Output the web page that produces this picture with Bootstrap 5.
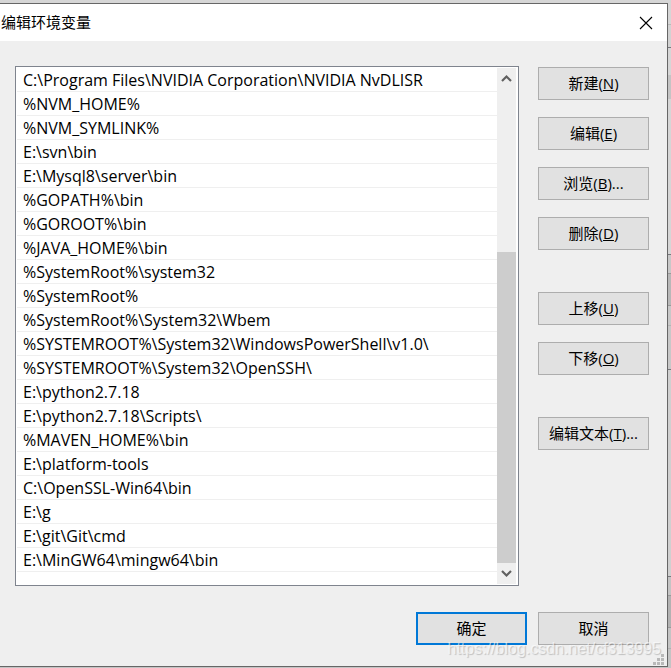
<!DOCTYPE html>
<html lang="zh-CN">
<head>
<meta charset="utf-8">
<meta name="viewport" content="width=device-width, initial-scale=1">
<title>编辑环境变量</title>
<link rel="stylesheet" href="https://cdn.jsdelivr.net/npm/bootstrap@5.3.0/dist/css/bootstrap.min.css">
<style>
  body {
    font-family: "Open Sans", "Noto Sans CJK SC", sans-serif;
    font-size: 15px;
    line-height: 24px;
    color: #000;
    background: #cfcfcf;
  }
  .desktop {
    padding: 3px 3px 1px 0;
    background: linear-gradient(#d6d6d6 0 24px, #b9b9b9 24px 25px, #d2d2d2 25px 47px, #77777c 47px 48px, #d6d6d6 48px 75px, #c4c4c4 75px 99px, #d6d6d6 99px 254px, #77777c 254px 255px, #c8c8c8 255px 273px, #999 273px 274px, #b8b8b8 274px 305px, #999 305px 306px, #c8c8c8 306px 325px, #b4b4b4 325px 326px, #c8c8c8 326px 369px, #77777c 369px 370px, #d0d0d0 370px 576px, #77777c 576px 577px, #c4c4c4 577px 595px, #999 595px 596px, #b2b2b2 596px 627px, #999 627px 628px, #c4c4c4 628px 648px, #b0b0b0 648px 649px, #c4c4c4 649px);
  }
  .dialog { background: #efefef; border: 1px solid #666; border-left: 0; }
  .titlebar { height: 37px; background: #fff; padding: 0 14px 0 1px; }
  .titlebar h1 { font-size: 15px; line-height: 24px; padding-bottom: 2px; }
  .close-x { width: 14px; height: 14px; }
  .dialog-main { padding: 25px 18px 0 15px; gap: 19px; }
  .paths { background: #fff; border: 1px solid #7f848e; padding: 1px; }
  .paths li { height: 24px; padding-left: 6px; border-bottom: 1px solid #efefef; font-size: 16px; line-height: 24px; }
  .scroll { width: 20px; background: #efefef; border-right: 1px solid #fff; }
  .scroll button { height: 21px; }
  .thumb { margin-top: 163px; background: #cdcdcd; }
  .side { width: 111px; gap: 17px; padding-top: 1px; }
  .key { width: 111px; height: 33px; background: #e1e1e1; border: 1px solid #adadad; color: #000; font-size: 15px; line-height: 24px; padding: 0 0 2px; }
  .key:hover { background: #e5f1fb; }
  .key.primary { border: 2px solid #0078d7; }
  .gap-above { margin-top: 25px; }
  .dialog-foot { padding: 26px 18px 21px 15px; gap: 11px; }
  .watermark { right: 6px; bottom: 7px; font: 16px/20px "Liberation Sans", Arial, sans-serif; color: rgba(255,255,255,.6); text-shadow: 1px 1px 1px rgba(0,0,0,.2); pointer-events: none; }
  .grip { right: 3px; bottom: 1px; }
</style>
<script src="https://cdn.jsdelivr.net/npm/bootstrap@5.3.0/dist/js/bootstrap.bundle.min.js"></script>
</head>
<body>
<div class="desktop min-vh-100 d-flex">
  <main class="dialog position-relative flex-grow-1 d-flex flex-column">
    <header class="titlebar d-flex align-items-center justify-content-between">
      <h1 class="m-0 fw-normal">编辑环境变量</h1>
      <button type="button" class="close-x btn p-0 border-0 rounded-0 d-flex" aria-label="关闭">
        <svg width="14" height="14" viewBox="0 0 14 14" aria-hidden="true"><path d="M1 1L13 13M13 1L1 13" stroke="#000" stroke-width="1.1"/></svg>
      </button>
    </header>

    <div class="dialog-main d-flex flex-grow-1">
      <div class="paths d-flex flex-grow-1">
        <ul class="list-unstyled m-0 flex-grow-1">
          <li>C:\Program Files\NVIDIA Corporation\NVIDIA NvDLISR</li>
          <li>%NVM_HOME%</li>
          <li>%NVM_SYMLINK%</li>
          <li>E:\svn\bin</li>
          <li>E:\Mysql8\server\bin</li>
          <li>%GOPATH%\bin</li>
          <li>%GOROOT%\bin</li>
          <li>%JAVA_HOME%\bin</li>
          <li>%SystemRoot%\system32</li>
          <li>%SystemRoot%</li>
          <li>%SystemRoot%\System32\Wbem</li>
          <li>%SYSTEMROOT%\System32\WindowsPowerShell\v1.0\</li>
          <li>%SYSTEMROOT%\System32\OpenSSH\</li>
          <li>E:\python2.7.18</li>
          <li>E:\python2.7.18\Scripts\</li>
          <li>%MAVEN_HOME%\bin</li>
          <li>E:\platform-tools</li>
          <li>C:\OpenSSL-Win64\bin</li>
          <li>E:\g</li>
          <li>E:\git\Git\cmd</li>
          <li>E:\MinGW64\mingw64\bin</li>
        </ul>
        <div class="scroll d-flex flex-column flex-shrink-0">
          <button type="button" class="btn p-0 border-0 rounded-0 d-flex align-items-center justify-content-center" aria-label="向上滚动">
            <svg width="11" height="9" viewBox="0 0 11 9" aria-hidden="true"><path d="M1 7L5.500 2.500L10 7" fill="none" stroke="#606060" stroke-width="2.200"/></svg>
          </button>
          <div class="thumb flex-grow-1"></div>
          <button type="button" class="btn p-0 border-0 rounded-0 d-flex align-items-center justify-content-center" aria-label="向下滚动">
            <svg width="11" height="9" viewBox="0 0 11 9" aria-hidden="true"><path d="M1 2L5.500 6.500L10 2" fill="none" stroke="#606060" stroke-width="2.200"/></svg>
          </button>
        </div>
      </div>

      <div class="side d-flex flex-column flex-shrink-0">
        <button type="button" class="key btn rounded-0">新建(<u>N</u>)</button>
        <button type="button" class="key btn rounded-0">编辑(<u>E</u>)</button>
        <button type="button" class="key btn rounded-0">浏览(<u>B</u>)...</button>
        <button type="button" class="key btn rounded-0">删除(<u>D</u>)</button>
        <button type="button" class="key btn rounded-0 gap-above">上移(<u>U</u>)</button>
        <button type="button" class="key btn rounded-0">下移(<u>O</u>)</button>
        <button type="button" class="key btn rounded-0 gap-above">编辑文本(<u>T</u>)...</button>
      </div>
    </div>

    <footer class="dialog-foot d-flex justify-content-end">
      <button type="button" class="key primary btn rounded-0">确定</button>
      <button type="button" class="key btn rounded-0">取消</button>
    </footer>

    <span class="watermark position-absolute">https://blog.csdn.net/cf313995</span>
    <svg class="grip position-absolute" width="11" height="11" viewBox="0 0 11 11" fill="#b9b9b9" aria-hidden="true"><path d="M8 0h3v3h-3zM4 4h3v3h-3zM8 4h3v3h-3zM0 8h3v3h-3zM4 8h3v3h-3zM8 8h3v3h-3z"/></svg>
  </main>
</div>
</body>
</html>
